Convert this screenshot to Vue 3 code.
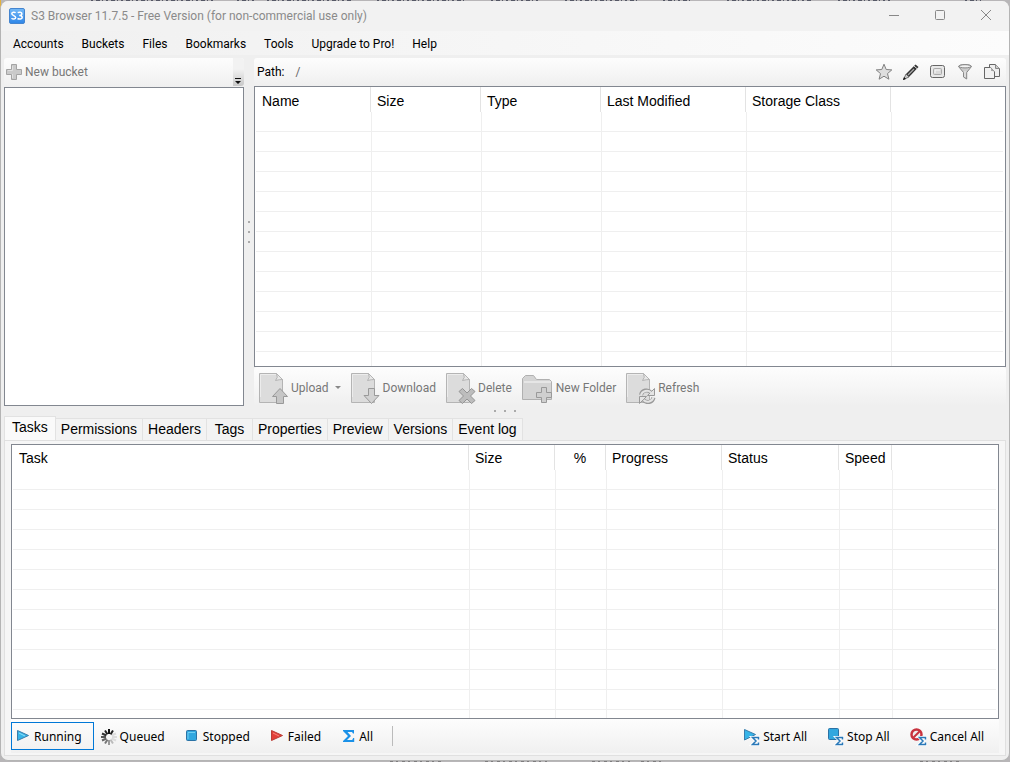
<script setup>
import { ref } from 'vue'

const menus = ['Accounts', 'Buckets', 'Files', 'Bookmarks', 'Tools', 'Upgrade to Pro!', 'Help']
const tabs = ['Tasks', 'Permissions', 'Headers', 'Tags', 'Properties', 'Preview', 'Versions', 'Event log']
const activeTab = ref('Tasks')
const path = ref('/')
const activeFilter = ref('Running')
const rows = 40
const fileColumns = ['Name', 'Size', 'Type', 'Last Modified', 'Storage Class', '']
const taskColumns = ['Task', 'Size', '%', 'Progress', 'Status', 'Speed', '']
</script>

<template>
  <div class="desktop">
    <svg class="strip" width="100%" height="2" aria-hidden="true">
      <path d="M91 .5h125M237 .5h17M267 .5h85M377 .5h88M491 .5h50M565 .5h72M663 .5h30M727 .5h85M838 .5h52M965 .5h16" stroke="#555866" stroke-dasharray="2 3 4 2 1 3" />
    </svg>
    <svg class="strip low" width="100%" height="2" aria-hidden="true">
      <path d="M390 1h52M485 1h62M592 1h38M641 1h22M920 1h42" stroke="#444" stroke-dasharray="3 3 2 4" />
    </svg>
    <div class="window">
      <header class="titlebar">
        <svg width="16" height="16" viewBox="0 0 16 16" aria-hidden="true">
          <defs><linearGradient id="logo-fill" x2="0" y2="1"><stop stop-color="#74b9f7" /><stop offset="1" stop-color="#2e86e8" /></linearGradient></defs>
          <rect x=".5" y=".5" width="15" height="15" rx="1.5" fill="url(#logo-fill)" stroke="#4585cf" />
          <path d="M6.600 4.800C5.600 3.900 2.800 3.900 2.800 5.800S6.700 7.600 6.700 9.500 3.600 11.200 2.500 10.200M8.700 4.600C10 3.900 12.900 4 12.900 5.800 12.900 7.200 11.500 7.500 10.200 7.500 11.700 7.500 13.200 8 13.200 9.400 13.200 11.300 10 11.400 8.500 10.500" fill="none" stroke="#fff" stroke-width="1.500" />
        </svg>
        <h1>S3 Browser 11.7.5 - Free Version (for non-commercial use only)</h1>
        <div class="controls">
          <button aria-label="Minimize"><svg width="12" height="12"><path d="M1 5.500h10" stroke="#888" /></svg></button>
          <button aria-label="Maximize"><svg width="12" height="12"><rect x="1.500" y=".5" width="9" height="9" rx="1" fill="none" stroke="#888" /></svg></button>
          <button aria-label="Close"><svg width="12" height="12"><path d="M1 0l10 10M11 0L1 10" stroke="#888" /></svg></button>
        </div>
      </header>

      <nav class="menubar">
        <button v-for="m in menus" :key="m">{{ m }}</button>
      </nav>

      <main class="body">
        <section class="upper">
          <aside class="buckets">
            <div class="toolbar">
              <button class="tool" disabled>
                <svg width="16" height="16"><path d="M5.500.5h5v5h5v5h-5v5h-5v-5h-5v-5h5z" fill="#cacaca" stroke="#a4a4a4" /><path d="M6.500 2v4.500H2M6.500 10v4" fill="none" stroke="#e0e0e0" /></svg>
                New bucket
              </button>
              <button class="overflow" aria-label="More">
                <svg width="10" height="9"><path d="M1 1h6v1H1zM1 4h6L4 7z" fill="#111" /></svg>
              </button>
            </div>
            <div class="list"></div>
          </aside>
          <div class="split vertical"><i></i><i></i><i></i></div>
          <section class="files">
            <div class="toolbar pathbar">
              <label for="path">Path:</label>
              <input id="path" v-model="path" />
              <button class="icon" aria-label="Favorite">
                <svg width="18" height="18"><path d="M9 1.200l2.200 5.300 5.600.4-4.300 3.700 1.400 5.600L9 13.200 4.100 16.200l1.400-5.600L1.200 6.900l5.600-.4z" fill="#dedede" stroke="#808080" /></svg>
              </button>
              <button class="icon" aria-label="Edit">
                <svg width="18" height="18"><path d="M4 11L13.500 1.500l3 2.500L7 14z" fill="#333" /><path d="M6 12l6-6" stroke="#aaa" stroke-width="1.200" /><path d="M12 3l3.500 3" stroke="#ddd" /><path d="M1.500 16.500L4 11l3 3z" fill="#ccc" stroke="#444" stroke-width=".7" /><path d="M1 17l1-3 2 2z" fill="#111" /></svg>
              </button>
              <button class="icon" aria-label="Preview pane">
                <svg width="18" height="18"><rect x="1.500" y="2.500" width="14" height="12" rx="2" fill="#e8e8e8" stroke="#666" /><rect x="4.500" y="5.500" width="8" height="6" rx="1" fill="#dadada" stroke="#aaa" /><path d="M6 10V7h5" fill="none" stroke="#f7f7f7" /></svg>
              </button>
              <button class="icon" aria-label="Filter">
                <svg width="18" height="18"><path d="M2.500 3.500C2.500 1 15.500 1 15.500 3.500L10.700 9.500V16L7.500 14V9.500z" fill="#ccc" stroke="#888" /><ellipse cx="9" cy="3.300" rx="6" ry="1.600" fill="#f3f3f3" stroke="#888" /><path d="M9 8v6" stroke="#eee" /></svg>
              </button>
              <button class="icon" aria-label="Copy">
                <svg width="18" height="18"><path d="M6.500 1.500h6l4 4v8h-10z" fill="#eee" stroke="#666" /><path d="M12.500 1.500v4h4" fill="#ccc" stroke="#888" /><path d="M1.500 4.500h6l4 4v7h-10z" fill="#f1f1f1" stroke="#666" /><path d="M7.500 4.500c2 1 1 2 1 3 1 0 2 0 3 1z" fill="#bbb" stroke="#999" /></svg>
              </button>
            </div>
            <div class="list">
              <table>
                <colgroup><col class="w115" /><col class="w110" /><col class="w120" /><col class="w145" /><col class="w145" /><col /></colgroup>
                <thead><tr><th v-for="c in fileColumns" :key="c">{{ c }}</th></tr></thead>
                <tbody><tr v-for="r in rows" :key="r"><td v-for="c in fileColumns" :key="c"></td></tr></tbody>
              </table>
            </div>
            <div class="toolbar actions">
              <button class="tool" disabled>
                <svg width="32" height="32" viewBox="1 0 32 32"><path d="M1.500 1.500h17l6 6v23h-23z" fill="#dcdcdc" stroke="#b4b4b4" /><path d="M2.500 25V2.500H18" fill="none" stroke="#ececec" /><path d="M18.500 1.500q2 4-1 7 4-1 7-1z" fill="#e8e8e8" stroke="#b4b4b4" /><path d="M22 16.500l7.500 8h-4v7h-7v-7h-4z" fill="#c6c6c6" stroke="#999" /></svg>
                Upload
                <svg class="caret" width="6" height="4"><path d="M0 0h6L3 3z" fill="#888" /></svg>
              </button>
              <button class="tool" disabled>
                <svg width="32" height="32" viewBox="1 0 32 32"><path d="M1.500 1.500h17l6 6v23h-23z" fill="#dcdcdc" stroke="#b4b4b4" /><path d="M2.500 25V2.500H18" fill="none" stroke="#ececec" /><path d="M18.500 1.500q2 4-1 7 4-1 7-1z" fill="#e8e8e8" stroke="#b4b4b4" /><path d="M18.500 16.500h6v7h4.500l-7.500 8-7.500-8h4.500z" fill="#d2d2d2" stroke="#999" /></svg>
                Download
              </button>
              <button class="tool" disabled>
                <svg width="32" height="32" viewBox="1 0 32 32"><path d="M1.500 1.500h17l6 6v23h-23z" fill="#dcdcdc" stroke="#b4b4b4" /><path d="M2.500 25V2.500H18" fill="none" stroke="#ececec" /><path d="M18.500 1.500q2 4-1 7 4-1 7-1z" fill="#e8e8e8" stroke="#b4b4b4" /><path d="M17.500 16.500l4.500 4.500 4.500-4.500 3.500 3-4.500 4.500 4.500 4.500-3.500 3-4.500-4.500-4.500 4.500-3.500-3 4.500-4.500-4.500-4.500z" fill="#bdbdbd" stroke="#949494" /></svg>
                Delete
              </button>
              <button class="tool" disabled>
                <svg width="34" height="32"><path d="M.5 27.500V6.500l3-3h8l3 4h13l2 2v18z" fill="#d4d4d4" stroke="#b0b0b0" /><path d="M2 9.500h27M2 10.500h27" stroke="#e6e6e6" /><path d="M19.500 15.500h5v5h5v5h-5v5h-5v-5h-5v-5h5z" fill="#cfcfcf" stroke="#999" /></svg>
                New Folder
              </button>
              <button class="tool" disabled>
                <svg width="32" height="32" viewBox="1 0 32 32"><path d="M1.500 1.500h17l6 6v23h-23z" fill="#dcdcdc" stroke="#b4b4b4" /><path d="M2.500 25V2.500H18" fill="none" stroke="#ececec" /><path d="M18.500 1.500q2 4-1 7 4-1 7-1z" fill="#e8e8e8" stroke="#b4b4b4" /><path d="M16 23c1-5 7-6 10-2.500M28.500 25.500c-1 5-7 6-10 2.500" fill="none" stroke="#999" stroke-width="4" /><path d="M29.500 16.500v7h-7zM14.500 31.500v-7h7z" fill="#e4e4e4" stroke="#999" /><path d="M16 23.500c1-5 7-6 10-3M28.500 25c-1 5-7 6-10 3" fill="none" stroke="#e4e4e4" stroke-width="2" /></svg>
                Refresh
              </button>
            </div>
          </section>
        </section>

        <div class="split horizontal"><i></i><i></i><i></i></div>

        <section class="lower">
          <div class="tabs" role="tablist">
            <button v-for="t in tabs" :key="t" role="tab" :aria-selected="t === activeTab" :class="{ active: t === activeTab }" @click="activeTab = t">{{ t }}</button>
          </div>
          <div class="page">
            <div class="list">
              <table>
                <colgroup><col /><col class="w86" /><col class="w51" /><col class="w116" /><col class="w117" /><col class="w53" /><col class="w104" /></colgroup>
                <thead><tr><th v-for="c in taskColumns" :key="c" :class="{ center: c === '%' }">{{ c }}</th></tr></thead>
                <tbody><tr v-for="r in rows" :key="r"><td v-for="c in taskColumns" :key="c"></td></tr></tbody>
              </table>
            </div>
            <footer class="status">
              <button :class="{ pressed: activeFilter === 'Running' }" @click="activeFilter = 'Running'">
                <svg width="16" height="16"><path d="M2.500 1.500l11 5-11 5z" fill="#36b4e8" stroke="#397cab" /><path d="M4 4l6 3" stroke="#8fe0fa" /></svg>Running
              </button>
              <button :class="{ pressed: activeFilter === 'Queued' }" @click="activeFilter = 'Queued'">
                <svg width="16" height="16" fill="none" stroke-width="2"><path d="M8 0v5" stroke="#111" /><path d="M4 1.500l2.500 3.900" stroke="#222" /><path d="M1 4.500l4.400 2" stroke="#333" /><path d="M0 8h5" stroke="#555" /><path d="M1 11.500l4.400-2" stroke="#666" /><path d="M4 14.500l2.500-3.900" stroke="#777" /><path d="M8 16v-5" stroke="#999" /><path d="M12 14.500l-2.500-3.900" stroke="#bbb" /><path d="M15 11.500l-4.400-2M16 8h-5M15 4.500l-4.400 2" stroke="#ddd" /><path d="M12 1.500l-2.500 3.900" stroke="#222" /></svg>Queued
              </button>
              <button :class="{ pressed: activeFilter === 'Stopped' }" @click="activeFilter = 'Stopped'">
                <svg width="16" height="16"><rect x="2.500" y="1.500" width="10" height="10" rx="1" fill="#31a7df" stroke="#2b72a5" /><path d="M4 10V3.500h7" fill="none" stroke="#71cef2" /></svg>Stopped
              </button>
              <button :class="{ pressed: activeFilter === 'Failed' }" @click="activeFilter = 'Failed'">
                <svg width="16" height="16"><path d="M2.500 1.500l11 5-11 5z" fill="#e23e38" stroke="#b93d36" /><path d="M4 4l6 3" stroke="#f6847b" /></svg>Failed
              </button>
              <button :class="{ pressed: activeFilter === 'All' }" @click="activeFilter = 'All'">
                <svg width="16" height="16"><path d="M3 1h11v3.500h-1L12 3H7.500L11 7l-4 4h5.200l1-2h1v4H3v-1l5-5-5-5z" fill="#1a91e8" /></svg>All
              </button>
              <span class="sep"></span>
              <span class="fill"></span>
              <button>
                <svg width="18" height="18"><path d="M2.500 1.500l11 5-11 5.500z" fill="#36b4e8" stroke="#397cab" /><path d="M16.500 11.500v-2h-6l3.500 3.500-3.500 3.500h6v-2" fill="none" stroke="#fff" stroke-width="3" /><path d="M16.500 11.500v-2h-6l3.500 3.500-3.500 3.500h6v-2" fill="none" stroke="#2978b8" stroke-width="1.500" /></svg>Start All
              </button>
              <button>
                <svg width="18" height="18"><rect x="2.500" y=".5" width="10" height="11" rx="1" fill="#31a7df" stroke="#2b72a5" /><path d="M16.500 11.500v-2h-6l3.500 3.500-3.500 3.500h6v-2" fill="none" stroke="#fff" stroke-width="3" /><path d="M16.500 11.500v-2h-6l3.500 3.500-3.500 3.500h6v-2" fill="none" stroke="#2978b8" stroke-width="1.500" /></svg>Stop All
              </button>
              <button>
                <svg width="18" height="18"><circle cx="7.500" cy="6.500" r="5" fill="#eee" stroke="#c8333f" stroke-width="2.500" /><path d="M4 10l7-7" stroke="#c8333f" stroke-width="2" /><path d="M16.500 11.500v-2h-6l3.500 3.500-3.500 3.500h6v-2" fill="none" stroke="#fff" stroke-width="3" /><path d="M16.500 11.500v-2h-6l3.500 3.500-3.500 3.500h6v-2" fill="none" stroke="#2978b8" stroke-width="1.500" /></svg>Cancel All
              </button>
            </footer>
          </div>
        </section>
      </main>
    </div>
  </div>
</template>

<style>
html, body, #app { height: 100%; }
</style>

<style scoped>
* { box-sizing: border-box; }
.desktop {
  position: relative;
  height: 100vh;
  padding: 1px 0;
  overflow: hidden;
  background: linear-gradient(#e4b13a 0 20px, #285a92 20px 34px, #e4b13a 34px 48px, #b8b6b8 48px) 0 0 / 1px 100% no-repeat, #b8b6b8;
  font: 12px/18px Roboto, "Noto Sans", sans-serif;
  color: #000;
}
.strip { position: absolute; left: 0; top: 0; }
.low { top: auto; bottom: 0; }
.window {
  position: relative;
  display: flex;
  flex-direction: column;
  height: 100%;
  border: 1px solid #b4b4b4;
  border-top: 0;
  border-radius: 8px;
  background: #efefef;
  overflow: hidden;
}
button { border: 0; padding: 0; background: none; font: inherit; color: inherit; white-space: nowrap; }
svg { display: block; flex: none; }
.titlebar { display: flex; align-items: center; gap: 6px; height: 30px; padding-left: 8px; background: #f2f2f2; flex: none; }
h1 { margin: 0; font: inherit; color: #8a8a8a; white-space: nowrap; }
.controls { display: flex; margin-left: auto; }
.controls button { display: flex; align-items: center; justify-content: center; width: 46px; height: 30px; }
.menubar { display: flex; align-items: center; gap: 18px; height: 24px; padding: 2px 0 0 12px; background: linear-gradient(90deg, #f0f0f0, #fcfcfc); flex: none; }
.body { display: flex; flex-direction: column; flex: 1; min-height: 0; padding: 3px 3px 4px; }
.upper { display: flex; flex: 348 1 0; min-height: 0; }
.buckets { display: flex; flex-direction: column; width: 240px; }
.files { display: flex; flex-direction: column; flex: 1; min-width: 0; }
.split { display: flex; align-items: center; justify-content: center; gap: 8px; flex: none; }
.vertical { flex-direction: column; width: 10px; }
.horizontal { height: 10px; }
.split i { width: 2px; height: 2px; background: #aaa; }
.toolbar { display: flex; align-items: center; height: 28px; background: linear-gradient(#fdfdfd, #f5f5f5 60%, #efefef); border-radius: 3px; flex: none; }
.buckets .toolbar { height: 29px; padding: 0 0 1px 2px; }
.tool { display: flex; align-items: center; color: #777; }
.buckets .tool { gap: 3px; }
.overflow { display: flex; align-items: flex-end; justify-content: center; width: 11px; height: 100%; margin-left: auto; background: linear-gradient(#f2f2f2 40%, #c8c8c8); border-radius: 0 3px 3px 0; }
.list { flex: 1; min-height: 0; overflow: hidden; border: 1px solid #828790; background: #fff; padding: 0 2px 0 1px; }
.pathbar { padding: 0 5px 0 3px; gap: 9px; }
.pathbar input { flex: 1; min-width: 0; border: 0; padding: 0 2px; background: none; font: inherit; color: #666; outline: 0; }
.actions { height: 39px; padding: 3px 5px 0; gap: 10px; }
.caret { margin-left: 6px; }
table { width: 100%; table-layout: fixed; border-collapse: separate; border-spacing: 0; font: 14px/20px "Liberation Sans", Arial, sans-serif; }
th { height: 25px; padding: 2px 0 0 6px; text-align: left; font-weight: 400; white-space: nowrap; border-right: 1px solid #e3e3e3; }
th:last-child { border-right: 0; }
.center { padding-left: 0; text-align: center; }
td { height: 20px; padding: 0; border-bottom: 1px solid #efefef; border-left: 1px solid #efefef; }
td:first-child { border-left: 0; }
.w115 { width: 115px; } .w110 { width: 110px; } .w120 { width: 120px; } .w145 { width: 145px; }
.w86 { width: 86px; } .w51 { width: 51px; } .w116 { width: 116px; } .w117 { width: 117px; } .w53 { width: 53px; } .w104 { width: 104px; }
.lower { display: flex; flex-direction: column; flex: 341 1 0; min-height: 0; }
.tabs { display: flex; align-items: flex-end; height: 24px; flex: none; font: 14px/20px "Liberation Sans", Arial, sans-serif; }
.tabs button { min-width: 46px; height: 22px; padding: 0 5px; border: 1px solid #e2e2e2; border-width: 1px 1px 0 0; background: #f3f3f3; }
.tabs .active { height: 24px; padding: 0 7px 2px; border-left-width: 1px; background: #fafafa; }
.page { display: flex; flex-direction: column; flex: 1; min-height: 0; padding: 3px 6px 2px; border: 1px solid #e0e0e0; background: #f6f6f6; }
.status { display: flex; align-items: center; height: 34px; flex: none; gap: 3px; padding-right: 3px; font-family: "Noto Sans", sans-serif; background: linear-gradient(#fdfdfd, #f0f0f0); }
.status button { display: flex; align-items: center; gap: 3px; height: 28px; padding: 2px 11px 0 3px; border: 1px solid transparent; }
.status .pressed { border-color: #0078d7; }
.sep { width: 1px; height: 20px; margin-left: 4px; background: #bbb; }
.fill { flex: 1; }
</style>
